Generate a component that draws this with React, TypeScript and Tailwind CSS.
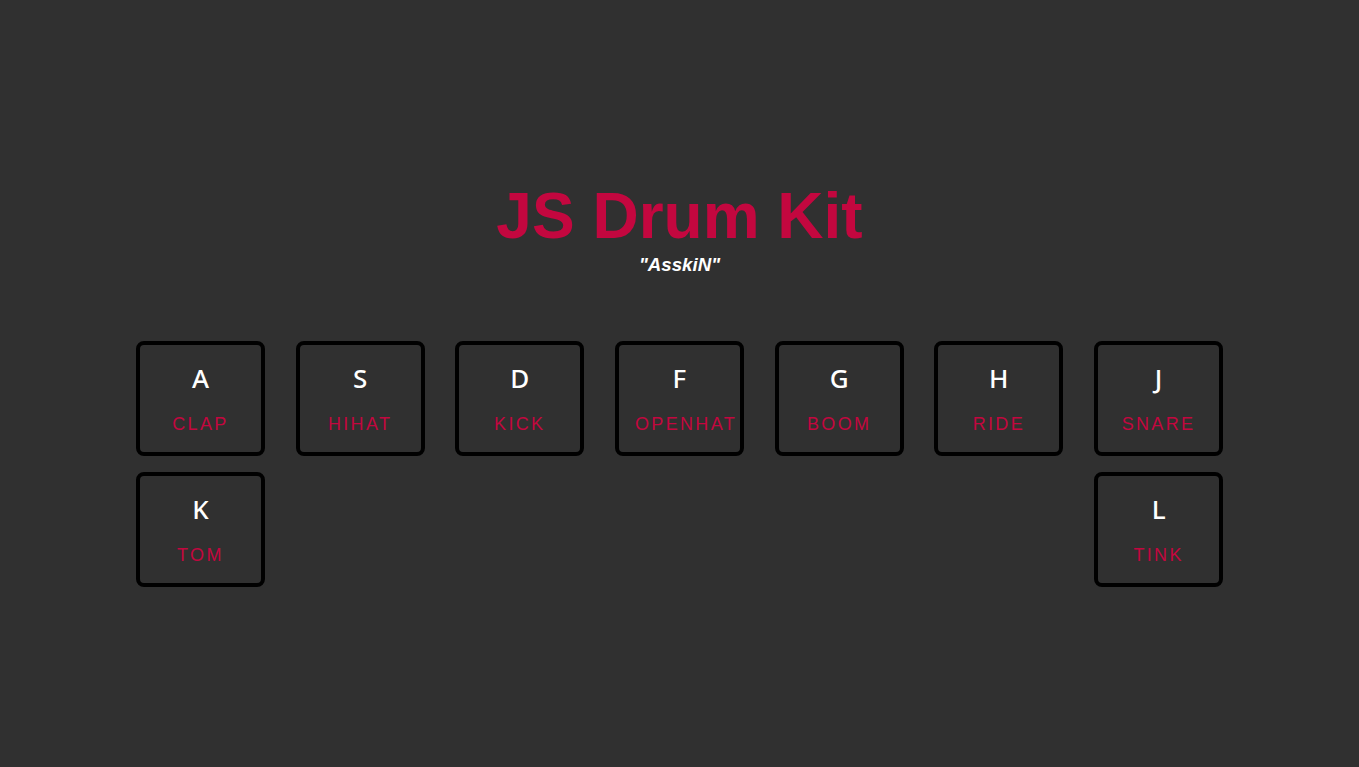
import React from "react";

const keys = [
  { k: "A", s: "clap" },
  { k: "S", s: "hihat" },
  { k: "D", s: "kick" },
  { k: "F", s: "openhat" },
  { k: "G", s: "boom" },
  { k: "H", s: "ride" },
  { k: "J", s: "snare" },
  { k: "K", s: "tom" },
  { k: "L", s: "tink" },
];

export default function App() {
  return (
    <div
      className="min-h-screen w-full bg-[#303030] pt-[184px] text-center"
      style={{ fontFamily: '"Liberation Sans", Arial, sans-serif' }}
    >
      <h1 className="text-[64px] leading-none font-bold text-[#c3073f]">JS Drum Kit</h1>
      <p className="mt-[8px] text-[18.72px] leading-none font-bold italic text-white">"AsskiN"</p>
      <div className="mx-auto mt-[66px] flex w-[80%] flex-wrap justify-between gap-x-[20px] gap-y-[16px]">
        {keys.map((item) => (
          <div
            key={item.k}
            className="block h-[115px] w-[129px] rounded-[8px] border-4 border-black px-4 pt-[20px] text-center"
          >
            <kbd
              className="block text-[26px] leading-none font-medium text-white"
              style={{ fontFamily: '"Noto Sans", "Open Sans", sans-serif' }}
            >
              {item.k}
            </kbd>
            <span className="mt-[24px] block whitespace-nowrap text-[18px] leading-none tracking-[0.13em] text-[#c3073f] uppercase">
              {item.s}
            </span>
          </div>
        ))}
      </div>
    </div>
  );
}
